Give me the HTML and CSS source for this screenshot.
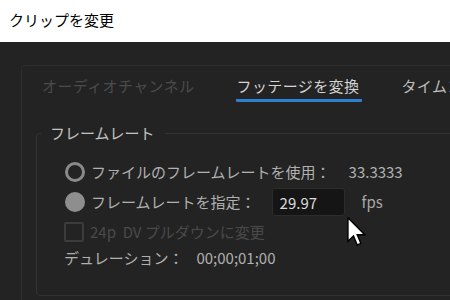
FILE: index.html
```html
<!DOCTYPE html>
<html lang="ja">
<head>
  <meta charset="UTF-8">
  <meta name="viewport" content="width=device-width, initial-scale=1.0">
  <title>クリップを変更</title>
  <link rel="stylesheet" href="styles.css">
</head>
<body>
  <!-- タイトルバー -->
  <div class="title-bar">クリップを変更</div>

  <!-- ダイアログ本体 -->
  <div class="dialog">
    <div class="panel">
      <!-- タブ -->
      <div class="tabs">
        <div class="tab disabled">オーディオチャンネル</div>
        <div class="tab active">フッテージを変換</div>
        <div class="tab">タイムコード</div>
      </div>

      <!-- フレームレート -->
      <fieldset class="group">
        <legend>フレームレート</legend>

        <div class="row row-file">
          <span class="radio"></span>
          <span class="label">ファイルのフレームレートを使用：</span>
          <span class="value">33.3333</span>
        </div>

        <div class="row row-assume">
          <span class="radio checked"></span>
          <span class="label">フレームレートを指定：</span>
          <input class="rate-input" type="text" value="29.97">
          <span class="unit">fps</span>
        </div>

        <div class="row row-pulldown disabled">
          <span class="checkbox"></span>
          <span class="label">24p&nbsp;&nbsp;DV プルダウンに変更</span>
        </div>

        <div class="row row-duration">
          <span class="label">デュレーション：</span>
          <span class="duration">00;00;01;00</span>
        </div>
      </fieldset>
    </div>

    <!-- マウスカーソル -->
    <svg class="cursor" width="19" height="30" viewBox="0 0 13 21">
      <path d="M0.5 0.5 L0.5 17 L4.4 13.3 L7 19.6 L9.6 18.5 L7 12.4 L12.3 12.4 Z" fill="#fff" stroke="#000" stroke-width="1"/>
    </svg>
  </div>
</body>
</html>
```

FILE: styles.css
```css
/* ページ全体 */
html, body {
  margin: 0;
  padding: 0;
  overflow: hidden;
}

body {
  width: 450px;
  height: 300px;
  background-color: #232323;
  font-family: "Noto Sans CJK JP", "Noto Sans", sans-serif;
  font-size: 15px;
  line-height: 20px;
  color: #b0b0b0;
}

/* タイトルバー */
.title-bar {
  height: 42px;
  box-sizing: border-box;
  padding: 10px 0 0 9px;
  background-color: #ffffff;
  color: #000000;
  font-size: 15px;
  line-height: 20px;
}

/* ダイアログ本体 */
.dialog {
  position: relative;
  height: 258px;
  padding: 23px 0 0 21px;
  box-sizing: border-box;
  overflow: hidden;
}

.panel {
  width: 440px;
  height: 240px;
  box-sizing: border-box;
  border: 1px solid #2e2e2e;
  border-right: none;
  border-bottom: none;
  border-radius: 4px 0 0 0;
  padding: 0 0 0 14px;
  overflow: hidden;
}

/* タブ */
.tabs {
  display: flex;
  gap: 42px;
  height: 45px;
  padding: 10px 0 0 6px;
  box-sizing: border-box;
}

.tab {
  height: 23px;
  color: #bdbdbd;
  white-space: nowrap;
  letter-spacing: 0.4px;
}

.tab.disabled {
  color: #4b4b4b;
}

.tab.active {
  color: #d4d4d4;
  padding: 0 3px 0 1px;
  margin-left: -1px;
  margin-right: -3px;
  border-bottom: 3px solid #2f7fd0;
  border-radius: 1px;
}

/* グループ枠 */
.group {
  margin: 12px 0 0 0;
  padding: 17px 0 0 28px;
  height: 173px;
  box-sizing: border-box;
  border: 1px solid #333333;
  border-radius: 4px;
}

.group legend {
  margin-left: -24px;
  padding: 0 10px 0 9px;
  color: #c3c3c3;
  line-height: 20px;
}

/* 各行 */
.row {
  display: flex;
  align-items: center;
  white-space: nowrap;
}

.row-file {
  height: 24px;
}

.row-assume {
  height: 28px;
  margin-top: 4px;
}

.row-pulldown {
  height: 20px;
  margin-top: 6px;
}

.row-duration {
  height: 20px;
  margin-top: 6px;
}

.radio {
  width: 20px;
  height: 20px;
  box-sizing: border-box;
  border: 3px solid #8a8a8a;
  border-radius: 50%;
  margin-right: 6px;
  flex: none;
}

.radio.checked {
  border: none;
  background-color: #8e8e8e;
}

.checkbox {
  width: 20px;
  height: 20px;
  box-sizing: border-box;
  border: 2px solid #3c3c3c;
  border-radius: 2px;
  margin: 0 6px 0 -1px;
  flex: none;
}

.row.disabled .label {
  color: #4a4a4a;
}

.value {
  margin-left: 18px;
  color: #b0b0b0;
}

.rate-input {
  width: 73px;
  height: 28px;
  box-sizing: border-box;
  margin: 0 0 0 16px;
  padding: 0 0 0 7px;
  background-color: #151515;
  border: 1px solid #2c2c2c;
  border-radius: 3px;
  color: #dcdcdc;
  font-family: inherit;
  font-size: 15px;
  outline: none;
}

.unit {
  margin-left: 17px;
  color: #a8a8a8;
}

.row-duration .label {
  margin-left: -1px;
}

.duration {
  margin-left: 13px;
}

/* マウスカーソル */
.cursor {
  position: absolute;
  left: 347px;
  top: 175px;
}
```
